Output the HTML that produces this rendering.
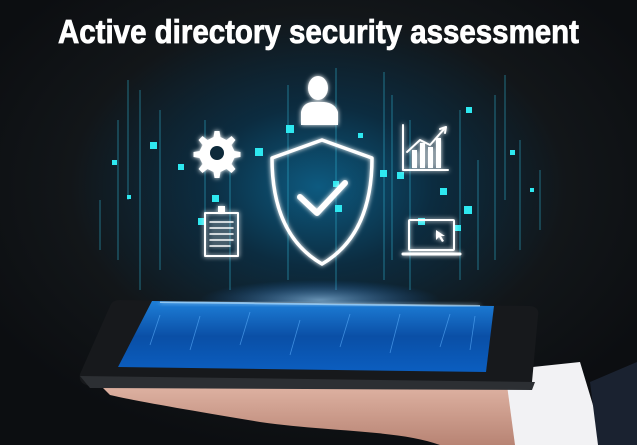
<!DOCTYPE html>
<html><head><style>
html,body{margin:0;padding:0;width:637px;height:445px;overflow:hidden;background:#0d1014}
svg{display:block}
</style></head><body>
<svg width="637" height="445" viewBox="0 0 637 445" xmlns="http://www.w3.org/2000/svg">
<defs>
<radialGradient id="bg" cx="0.5" cy="0.42" r="0.6">
<stop offset="0" stop-color="#0d5a80"/><stop offset="0.3" stop-color="#0c2c40"/><stop offset="0.65" stop-color="#121619"/><stop offset="1" stop-color="#0c0e11"/>
</radialGradient>
<linearGradient id="scr" x1="0" y1="0" x2="0" y2="1">
<stop offset="0" stop-color="#1e7fd8"/><stop offset="0.5" stop-color="#0a4fa6"/><stop offset="1" stop-color="#0b5ec0"/>
</linearGradient>
<linearGradient id="hand" x1="0" y1="0" x2="0" y2="1">
<stop offset="0" stop-color="#e3b8a8"/><stop offset="1" stop-color="#b88474"/>
</linearGradient>
<filter id="gl"><feGaussianBlur stdDeviation="2.5" result="b"/><feMerge><feMergeNode in="b"/><feMergeNode in="SourceGraphic"/></feMerge></filter>
<radialGradient id="flare" cx="0.5" cy="0.5" r="0.5"><stop offset="0" stop-color="#9fd4ff" stop-opacity="0.9"/><stop offset="1" stop-color="#1a6fd0" stop-opacity="0"/></radialGradient>
</defs>
<rect width="637" height="445" fill="url(#bg)"/>
<g stroke="#2fb7d6" stroke-width="1" opacity="0.55">
<line x1="140" y1="90" x2="140" y2="290"/><line x1="160" y1="110" x2="160" y2="270"/><line x1="205" y1="120" x2="205" y2="250"/><line x1="230" y1="140" x2="230" y2="290"/><line x1="288" y1="85" x2="288" y2="280"/><line x1="336" y1="68" x2="336" y2="290"/><line x1="384" y1="72" x2="384" y2="280"/><line x1="392" y1="95" x2="392" y2="260"/><line x1="410" y1="120" x2="410" y2="290"/><line x1="460" y1="110" x2="460" y2="280"/><line x1="478" y1="160" x2="478" y2="270"/><line x1="495" y1="95" x2="495" y2="260"/><line x1="520" y1="140" x2="520" y2="250"/><line x1="118" y1="120" x2="118" y2="260"/><line x1="100" y1="200" x2="100" y2="250"/><line x1="540" y1="170" x2="540" y2="230"/><line x1="128" y1="80" x2="128" y2="200"/><line x1="505" y1="75" x2="505" y2="200"/>
</g>
<g fill="#2ee8f0">
<rect x="286" y="125" width="8" height="8"/><rect x="255" y="148" width="8" height="8"/><rect x="178" y="164" width="6" height="6"/><rect x="150" y="142" width="7" height="7"/><rect x="358" y="133" width="5" height="5"/><rect x="380" y="170" width="7" height="7"/><rect x="397" y="172" width="7" height="7"/><rect x="440" y="188" width="7" height="7"/><rect x="464" y="206" width="8" height="8"/><rect x="418" y="218" width="7" height="7"/><rect x="212" y="195" width="7" height="7"/><rect x="198" y="218" width="7" height="7"/><rect x="333" y="181" width="6" height="6"/><rect x="466" y="107" width="6" height="6"/><rect x="510" y="150" width="5" height="5"/><rect x="112" y="160" width="5" height="5"/><rect x="335" y="205" width="7" height="7"/><rect x="455" y="225" width="6" height="6"/><rect x="127" y="195" width="4" height="4"/><rect x="530" y="188" width="4" height="4"/>
</g>
<ellipse cx="320" cy="300" rx="120" ry="20" fill="url(#flare)" opacity="0.7"/>
<!-- hand -->
<path d="M100 385 C150 378 300 380 420 382 L520 378 L540 420 L530 445 L440 445 C400 430 330 432 260 422 C200 412 140 402 110 395 Z" fill="url(#hand)"/>
<path d="M505 370 L580 362 L605 445 L515 445 Z" fill="#f2f2f4"/>
<path d="M590 382 L637 362 L637 445 L598 445 Z" fill="#1a2230"/>
<!-- tablet -->
<path d="M120 300 L530 306 Q540 307 538 316 L532 382 Q530 389 520 389 L90 386 Q78 384 80 374 L110 306 Q112 300 120 300 Z" fill="#17191c"/>
<path d="M80 376 L535 382 L532 390 L90 388 Z" fill="#2c2f33"/>
<path d="M152 301 L494 306 L486 372 L118 367 Z" fill="url(#scr)"/>
<path d="M160 302 L480 306" stroke="#bfe5ff" stroke-width="2" opacity="0.7" filter="url(#gl)"/>
<g stroke="#5fb3ff" stroke-width="0.8" opacity="0.6">
<line x1="150" y1="345" x2="160" y2="315"/><line x1="190" y1="350" x2="200" y2="316"/><line x1="240" y1="345" x2="250" y2="312"/><line x1="290" y1="355" x2="300" y2="320"/><line x1="340" y1="347" x2="350" y2="314"/><line x1="390" y1="353" x2="400" y2="314"/><line x1="440" y1="347" x2="450" y2="314"/><line x1="470" y1="350" x2="475" y2="316"/>
</g>
<!-- icons -->
<g fill="none" stroke="#fff" stroke-width="3.5" stroke-linejoin="round" stroke-linecap="round" filter="url(#gl)">
<path d="M322 140 L372 158 Q372 235 322 264 Q272 235 272 158 Z"/>
<path d="M300 197 L317 213 L345 183" stroke-width="6"/>
<circle cx="217" cy="153" r="9" stroke-width="6"/>
<path d="M403 125 L403 170 L448 170" stroke-width="2"/>
<path d="M407 152 L420 140 L430 145 L445 128" stroke-width="2"/>
<path d="M440 129 L446 127 L445 133" stroke-width="2"/>
<rect x="205" y="213" width="33" height="43" stroke-width="2"/>
<path d="M210 222 H233 M210 228 H233 M210 234 H233 M210 240 H233 M210 246 H230" stroke-width="1.5"/>
<rect x="409" y="220" width="45" height="30" rx="1" stroke-width="2"/>
<path d="M403 254 H460" stroke-width="3"/>
</g>
<g fill="#fff" filter="url(#gl)">
<path d="M217 131 l5 0 l1 6 l6 3 l5 -4 l4 4 l-4 5 l3 6 l6 1 l0 5 l-6 1 l-3 6 l4 5 l-4 4 l-5 -4 l-6 3 l-1 6 l-5 0 l-1 -6 l-6 -3 l-5 4 l-4 -4 l4 -5 l-3 -6 l-6 -1 l0 -5 l6 -1 l3 -6 l-4 -5 l4 -4 l5 4 l6 -3 z" transform="translate(-2.5 0)" fill-rule="evenodd"/>
<circle cx="217" cy="153" r="7" fill="#0e2a3a"/>
<ellipse cx="318" cy="88" rx="10" ry="12"/>
<path d="M301 125 L301 112 Q303 103 312 102 L324 102 Q335 103 338 112 L338 125 Z"/>
<rect x="412" y="150" width="5" height="18"/><rect x="420" y="143" width="5" height="25"/><rect x="428" y="147" width="5" height="21"/><rect x="436" y="138" width="5" height="30"/>
<rect x="218" y="206" width="7" height="6"/>
<path d="M436 230 L436 240 L439 237 L442 242 L444 241 L441 236 L445 236 Z"/>
</g>
<text x="318.5" y="43" text-anchor="middle" font-family="'Liberation Sans Narrow','Liberation Sans',sans-serif" font-weight="bold" font-size="33" fill="#fff" stroke="#fff" stroke-width="0.8" textLength="521" lengthAdjust="spacingAndGlyphs">Active directory security assessment</text>
</svg>
</body></html>
